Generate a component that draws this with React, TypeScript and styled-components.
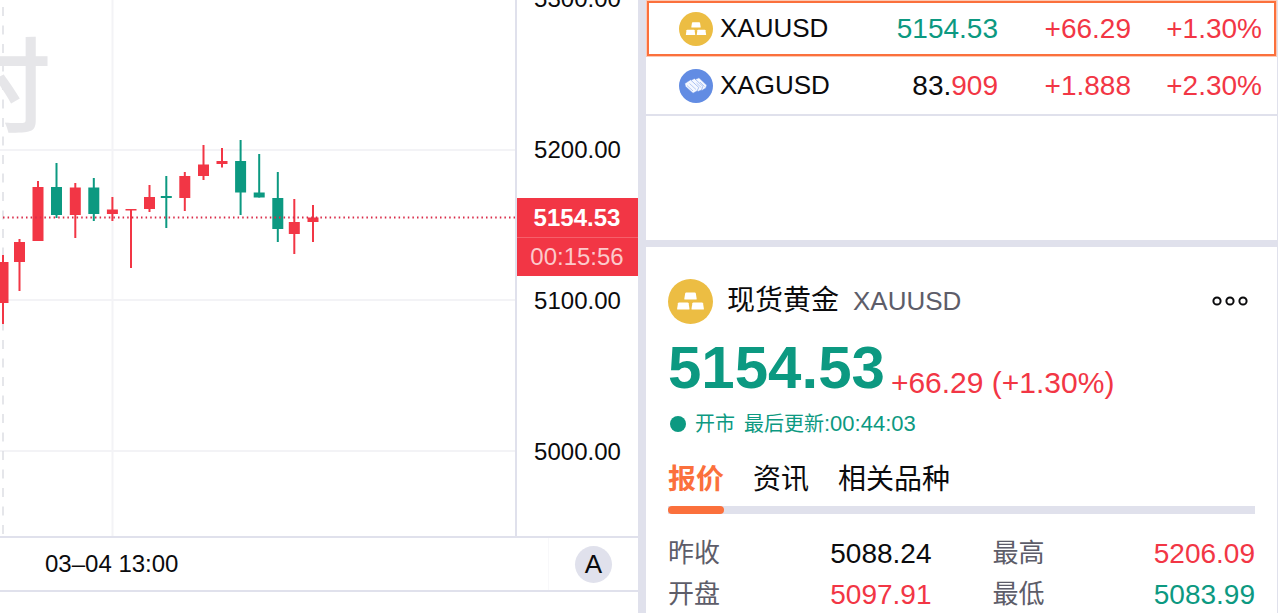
import React, { useState } from 'react';
import styled, { createGlobalStyle } from 'styled-components';

const color = {
  up: '#f23645',
  down: '#0c9981',
  accent: '#fb703c',
  line: '#e0e1ec',
  grid: '#f3f3f6',
  muted: '#5d5d69',
  text: '#0b0b0d',
};

type Tone = 'up' | 'down' | 'text';

const GlobalStyle = createGlobalStyle`
  *, *::before, *::after { box-sizing: border-box; }
  body {
    margin: 0;
    color: ${color.text};
    background: #fff;
    font-family: "Liberation Sans", "Noto Sans CJK SC", sans-serif;
  }
  button { font: inherit; color: inherit; background: none; border: 0; padding: 0; cursor: pointer; }
`;

const Page = styled.main`
  display: grid;
  grid-template-columns: minmax(0, 638fr) minmax(0, 631fr);
  column-gap: 8px;
  height: 100vh;
  overflow: hidden;
  padding-right: 1px;
  background: ${color.line};
`;

const ChartPanel = styled.section`
  display: flex;
  flex-direction: column;
  background: #fff;
`;

const ChartArea = styled.div`
  display: flex;
  flex: 1;
  min-height: 0;
`;

const Plot = styled.svg`
  flex: 1;
  min-width: 0;
  height: 100%;
  display: block;
`;

const PriceAxis = styled.div`
  position: relative;
  width: 123px;
  overflow: hidden;
  border-left: 2px solid ${color.line};
  font-size: 24px;
  text-align: center;
`;

const AxisLabels = styled.div`
  display: flex;
  flex-direction: column;
  margin-top: -77px;
  line-height: 151px;
`;

const PriceTag = styled.div`
  position: absolute;
  top: 198px;
  left: -1px;
  right: 0;
  color: #fff;
  background: ${color.up};
  line-height: 39px;
`;

const TagPrice = styled.div`
  font-weight: 700;
`;

const TagCountdown = styled.div`
  color: #fcc9cb;
  box-shadow: inset 0 1px 0 #f5606b;
`;

const TimeAxis = styled.div`
  display: flex;
  align-items: center;
  height: 56px;
  border-top: 2px solid ${color.line};
  border-bottom: 2px solid ${color.line};
  font-size: 24px;
`;

const TimeLabel = styled.span`
  flex: 1;
  padding-left: 45px;
`;

const AxisCorner = styled.div`
  display: flex;
  align-items: center;
  justify-content: center;
  width: 90px;
  height: 100%;
  border-left: 1px solid #f8f8fa;
`;

const AutoButton = styled.button`
  width: 37px;
  height: 37px;
  border-radius: 50%;
  background: ${color.line};
  font-size: 26px;
  line-height: 37px;
`;

const ChartFooter = styled.div`
  height: 21px;
`;

const SidePanel = styled.div`
  display: flex;
  flex-direction: column;
  gap: 7px;
  min-height: 0;
`;

const Watchlist = styled.section`
  height: 240px;
  background: #fff;
`;

const QuoteTable = styled.table`
  display: block;
  font-size: 28px;
`;

const QuoteBody = styled.tbody`
  display: block;
`;

const QuoteRow = styled.tr<{ $selected?: boolean }>`
  display: grid;
  grid-template-columns: 1fr 120px 133px 131px;
  align-items: center;
  height: ${p => (p.$selected ? 57 : 59)}px;
  padding: 0 15px 0 33px;
  text-align: right;
  ${p =>
    p.$selected
      ? `box-shadow: inset 0 0 0 1px #fdc9b4, inset 0 0 0 3px ${color.accent};`
      : `border-bottom: 2px solid ${color.line};`}
`;

const SymbolCell = styled.th`
  display: flex;
  align-items: center;
  gap: 7px;
  padding: 0;
  font-size: 26px;
  font-weight: 400;
`;

const ValueCell = styled.td<{ $tone: Tone }>`
  padding: 0;
  color: ${p => color[p.$tone]};
`;

const Tinted = styled.span<{ $tone: Tone }>`
  color: ${p => color[p.$tone]};
`;

const Detail = styled.section`
  flex: 1;
  min-height: 0;
  overflow: hidden;
  padding: 32px 22px 0;
  background: #fff;
`;

const DetailHeader = styled.header`
  display: flex;
  align-items: center;
  gap: 14px;
  height: 44px;
`;

const InstrumentName = styled.h1`
  margin: 0;
  font-size: 28px;
  font-weight: 400;
  line-height: 40px;
`;

const InstrumentCode = styled.span`
  color: ${color.muted};
  font-size: 26px;
`;

const MoreButton = styled.button`
  display: flex;
  margin-left: auto;
  padding: 8px 6px;
`;

const PriceLine = styled.div`
  display: flex;
  align-items: flex-end;
  gap: 6px;
  margin-top: 15px;
`;

const BigPrice = styled.strong`
  color: ${color.down};
  font-size: 60px;
  line-height: 60px;
`;

const Change = styled.span`
  color: ${color.up};
  font-size: 30px;
  line-height: 30px;
`;

const Status = styled.p`
  display: flex;
  align-items: center;
  gap: 9px;
  margin: 11px 0 0;
  padding-left: 2px;
  color: ${color.down};
  font-size: 20px;
  line-height: 30px;
`;

const StatusDot = styled.i`
  width: 16px;
  height: 16px;
  border-radius: 50%;
  background: currentColor;
`;

const Clock = styled.time`
  font-size: 22px;
`;

const Tabs = styled.div`
  display: flex;
  gap: 29px;
  margin-top: 21px;
  box-shadow: inset 0 -8px 0 ${color.line};
`;

const Tab = styled.button<{ $active: boolean }>`
  font-size: 28px;
  line-height: 40px;
  font-weight: ${p => (p.$active ? 700 : 400)};
  color: ${p => (p.$active ? color.accent : color.text)};

  &::after {
    content: '';
    display: block;
    height: 8px;
    margin-top: 6px;
    border-radius: 4px;
    background: ${p => (p.$active ? color.accent : 'transparent')};
  }
`;

const Stats = styled.dl`
  display: grid;
  grid-template-columns: 162fr 162fr 100fr 162fr;
  margin: 19px 0 0;
  line-height: 41px;
`;

const StatLabel = styled.dt`
  color: ${color.muted};
  font-size: 26px;
`;

const StatValue = styled.dd<{ $tone: Tone; $end?: boolean }>`
  margin: 0;
  font-size: 28px;
  text-align: ${p => (p.$end ? 'right' : 'left')};
  color: ${p => color[p.$tone]};
`;

function GoldIcon({ size }: { size: number }) {
  return (
    <svg width={size} height={size} viewBox="0 0 45 45" aria-hidden="true">
      <circle cx="22.5" cy="22.5" r="22.5" fill="#ecbd43" />
      <g fill="#fff">
        <path d="M18.2 13.500h8.600q.8 0 1 .8l.9 5.400q.1.900-.8.900H17.100q-.9 0-.8-.9l.9-5.400q.2-.8 1-.8z" />
        <path d="M11 23.500h8.600q.8 0 1 .8l.9 5.400q.1.900-.8.900H9.900q-.9 0-.8-.9l.9-5.400q.2-.8 1-.8z" />
        <path d="M25.400 23.500h8.600q.8 0 1 .8l.9 5.400q.1.900-.8.900H24.300q-.9 0-.8-.9l.9-5.400q.2-.8 1-.8z" />
      </g>
    </svg>
  );
}

function SilverIcon({ size }: { size: number }) {
  return (
    <svg width={size} height={size} viewBox="0 0 34 34" aria-hidden="true">
      <circle cx="17" cy="17" r="17" fill="#628ce3" />
      <g fill="#f5f8ff" stroke="#628ce3" strokeWidth="0.5" strokeLinejoin="round">
        <path d="M16.500 10.200 20 8.800 27.800 16.200 26.800 19 23 21.500 15.500 14z" />
        <path d="M11.500 11.500 15.500 9.500 24 17.500 22.500 21 19 22.500 10.500 15z" />
        <path d="M5.800 14.500 11.500 10.800 19.800 18.500 18 22 14 24.200 6.500 17.500z" />
      </g>
      <g stroke="#8aa9ec" strokeWidth="0.6" fill="none">
        <path d="M8 16.500 14 22M10.500 14.500 17 20.500M17.500 14l5 4.800M21 13l4.500 4.500" />
      </g>
    </svg>
  );
}

interface Candle {
  x: number;
  high: number;
  top: number;
  bottom: number;
  low: number;
  tone: 'up' | 'down';
}

const candles: Candle[] = [
  { x: 3, high: 255, top: 262, bottom: 303, low: 324, tone: 'up' },
  { x: 19.5, high: 239, top: 242, bottom: 262, low: 291, tone: 'up' },
  { x: 38, high: 181, top: 187, bottom: 241, low: 241, tone: 'up' },
  { x: 56.5, high: 163, top: 187, bottom: 215, low: 218, tone: 'down' },
  { x: 75.3, high: 183, top: 187.5, bottom: 215, low: 238, tone: 'up' },
  { x: 93.8, high: 178, top: 187.5, bottom: 214, low: 221, tone: 'down' },
  { x: 112.4, high: 197, top: 209.5, bottom: 214, low: 221, tone: 'up' },
  { x: 131, high: 209, top: 209, bottom: 210.5, low: 268, tone: 'up' },
  { x: 149.5, high: 185, top: 197, bottom: 209, low: 212, tone: 'up' },
  { x: 166.3, high: 176, top: 196, bottom: 198, low: 228, tone: 'down' },
  { x: 184.8, high: 172, top: 176, bottom: 198, low: 211, tone: 'up' },
  { x: 203.5, high: 145, top: 164.5, bottom: 176, low: 180, tone: 'up' },
  { x: 222, high: 148, top: 161, bottom: 164, low: 167.5, tone: 'up' },
  { x: 240.6, high: 140, top: 161, bottom: 192.5, low: 215, tone: 'down' },
  { x: 259.2, high: 154, top: 192.5, bottom: 197.5, low: 197.5, tone: 'down' },
  { x: 277.8, high: 172, top: 198, bottom: 229, low: 242, tone: 'down' },
  { x: 294.3, high: 199, top: 222, bottom: 234, low: 254, tone: 'up' },
  { x: 313, high: 205, top: 217.5, bottom: 222, low: 242, tone: 'up' },
];

function CandleChart() {
  return (
    <Plot role="img" aria-label="XAUUSD K线图">
      <g stroke={color.grid} strokeWidth="2">
        <line x1="0" x2="100%" y1="150" y2="150" />
        <line x1="0" x2="100%" y1="300" y2="300" />
        <line x1="0" x2="100%" y1="451" y2="451" />
        <line x1="112.5" x2="112.5" y1="0" y2="100%" />
      </g>
      <line x1="3" x2="3" y1="7" y2="100%" stroke="#dddee3" strokeWidth="1.5" strokeDasharray="9 9.5" />
      <text x="51" y="125" textAnchor="end" fontSize="104" fontWeight="500" fill="#e6e6e9">
        时
      </text>
      {candles.map(c => (
        <g key={c.x} fill={color[c.tone]}>
          <rect x={c.x - 1} y={c.high} width="2" height={c.low - c.high} />
          <rect x={c.x - 5.5} y={c.top} width="11" height={c.bottom - c.top} />
        </g>
      ))}
      <line x1="3" x2="100%" y1="217.5" y2="217.5" stroke="#d92c49" strokeWidth="2" strokeDasharray="1.5 3.1" />
    </Plot>
  );
}

const axisPrices = ['5300.00', '5200.00', '5100.00', '5000.00'];
const tabNames = ['报价', '资讯', '相关品种'];

export default function App() {
  const [active, setActive] = useState(0);
  return (
    <>
      <GlobalStyle />
      <Page>
        <ChartPanel>
          <ChartArea>
            <CandleChart />
            <PriceAxis>
              <AxisLabels>
                {axisPrices.map(p => (
                  <span key={p}>{p}</span>
                ))}
              </AxisLabels>
              <PriceTag>
                <TagPrice>5154.53</TagPrice>
                <TagCountdown>00:15:56</TagCountdown>
              </PriceTag>
            </PriceAxis>
          </ChartArea>
          <TimeAxis>
            <TimeLabel>03–04 13:00</TimeLabel>
            <AxisCorner>
              <AutoButton type="button">A</AutoButton>
            </AxisCorner>
          </TimeAxis>
          <ChartFooter />
        </ChartPanel>

        <SidePanel>
          <Watchlist>
            <QuoteTable>
              <QuoteBody>
                <QuoteRow $selected>
                  <SymbolCell scope="row">
                    <GoldIcon size={34} />
                    XAUUSD
                  </SymbolCell>
                  <ValueCell $tone="down">5154.53</ValueCell>
                  <ValueCell $tone="up">+66.29</ValueCell>
                  <ValueCell $tone="up">+1.30%</ValueCell>
                </QuoteRow>
                <QuoteRow>
                  <SymbolCell scope="row">
                    <SilverIcon size={34} />
                    XAGUSD
                  </SymbolCell>
                  <ValueCell $tone="text">
                    83.<Tinted $tone="up">909</Tinted>
                  </ValueCell>
                  <ValueCell $tone="up">+1.888</ValueCell>
                  <ValueCell $tone="up">+2.30%</ValueCell>
                </QuoteRow>
              </QuoteBody>
            </QuoteTable>
          </Watchlist>

          <Detail>
            <DetailHeader>
              <GoldIcon size={45} />
              <InstrumentName>现货黄金</InstrumentName>
              <InstrumentCode>XAUUSD</InstrumentCode>
              <MoreButton type="button" aria-label="更多">
                <svg width="38" height="12" viewBox="0 0 38 12" fill="none" stroke="#0b0b0d" strokeWidth="2">
                  <circle cx="6" cy="6" r="3.6" />
                  <circle cx="19" cy="6" r="3.6" />
                  <circle cx="32" cy="6" r="3.6" />
                </svg>
              </MoreButton>
            </DetailHeader>
            <PriceLine>
              <BigPrice>5154.53</BigPrice>
              <Change>+66.29 (+1.30%)</Change>
            </PriceLine>
            <Status>
              <StatusDot />
              <span>开市</span>
              <span>
                最后更新<Clock>:00:44:03</Clock>
              </span>
            </Status>
            <Tabs role="tablist">
              {tabNames.map((name, i) => (
                <Tab
                  key={name}
                  type="button"
                  role="tab"
                  aria-selected={i === active}
                  $active={i === active}
                  onClick={() => setActive(i)}
                >
                  {name}
                </Tab>
              ))}
            </Tabs>
            <Stats>
              <StatLabel>昨收</StatLabel>
              <StatValue $tone="text">5088.24</StatValue>
              <StatLabel>最高</StatLabel>
              <StatValue $tone="up" $end>5206.09</StatValue>
              <StatLabel>开盘</StatLabel>
              <StatValue $tone="up">5097.91</StatValue>
              <StatLabel>最低</StatLabel>
              <StatValue $tone="down" $end>5083.99</StatValue>
            </Stats>
          </Detail>
        </SidePanel>
      </Page>
    </>
  );
}
